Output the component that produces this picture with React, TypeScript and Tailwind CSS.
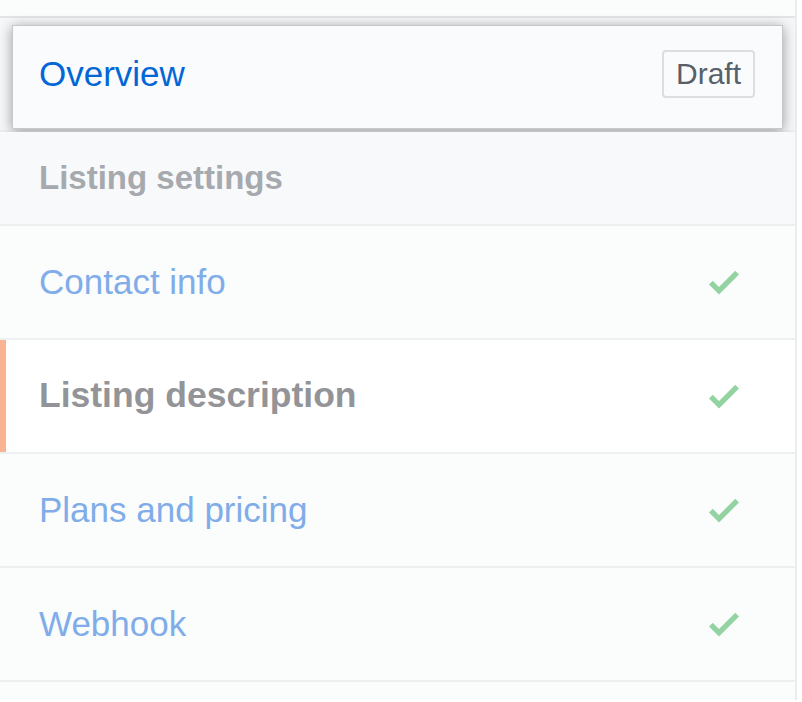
const rows = [
  { label: "Contact info", done: true, current: false },
  { label: "Listing description", done: true, current: true },
  { label: "Plans and pricing", done: true, current: false },
  { label: "Webhook", done: true, current: false },
];

function Check() {
  return (
    <svg width="30" height="40" viewBox="0 0 12 16" className="fill-[#93d3a2]">
      <path d="M12 5l-8 8-4-4 1.5-1.5L4 10l6.5-6.5L12 5z" />
    </svg>
  );
}

export default function App() {
  return (
    <div className="min-h-[702px] bg-white font-['Liberation_Sans',Arial,sans-serif]">
      <div className="w-[797px] border-r-2 border-[#eaecef] bg-[#fbfcfc]">
        <div className="h-[18px] border-b-2 border-[#e2e4e6] bg-[#fbfcfc]" />

        {/* selected item, raised */}
        <div className="h-[114px] border-b-2 border-[#eceef0] bg-[#f6f7f9] px-[12px] pt-[7px]">
          <div className="flex h-[104px] items-center justify-between border border-[#c6c8ca] bg-[#fafbfc] pb-[6px] pl-[26px] pr-[27px] shadow-[0_2px_12px_rgba(0,0,0,0.38)]">
            <span className="text-[35px] text-[#0366d6]">Overview</span>
            <span className="rounded-[4px] border-2 border-[#dcdee1] px-[12px] py-[5px] text-[30px] leading-[34px] text-[#586069]">
              Draft
            </span>
          </div>
        </div>

        <div className="flex h-[94px] items-center border-b-2 border-[#eceef0] bg-[#f8f9fb] pl-[39px]">
          <span className="text-[33px] font-bold text-[#a6a9ad]">Listing settings</span>
        </div>

        {rows.map((row) => (
          <div
            key={row.label}
            className={`relative flex h-[114px] items-center justify-between border-b-2 border-[#eeefef] pl-[39px] pr-[56px] ${
              row.current ? "bg-white" : "bg-[#fbfcfc]"
            }`}
          >
            {row.current && (
              <span className="absolute bottom-0 left-0 top-0 w-[6px] bg-[#f9b593]" />
            )}
            <span
              className={
                row.current
                  ? "text-[35.5px] font-bold text-[#929497]"
                  : "text-[35px] text-[#80ade9]"
              }
            >
              {row.label}
            </span>
            {row.done && <Check />}
          </div>
        ))}

        <div className="h-[18px] bg-[#fbfcfc]" />
      </div>
    </div>
  );
}
